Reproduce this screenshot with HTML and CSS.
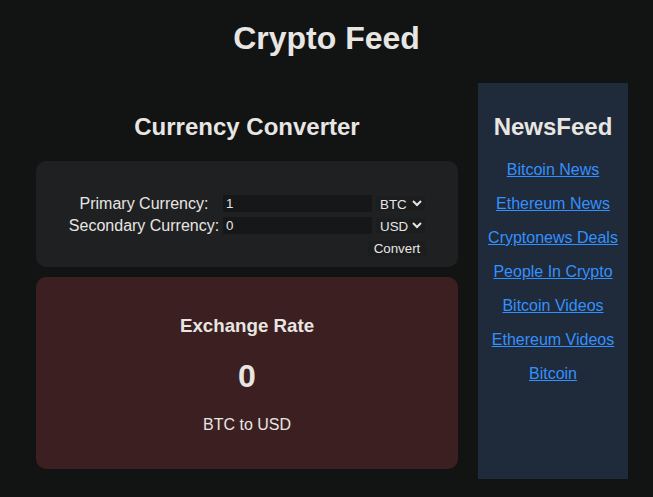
FILE: index.html
```html
<!DOCTYPE html>
<html lang="en">
<head>
<meta charset="utf-8">
<title>Crypto Feed</title>
<link rel="stylesheet" href="styles.css">
</head>
<body>
<h1 class="title">Crypto Feed</h1>
<div class="layout">
  <main class="main">
    <h2 class="section-title">Currency Converter</h2>
    <div class="card converter">
      <div class="form">
        <label class="label" for="primary">Primary Currency:</label>
        <input class="amount" id="primary" type="number" value="1">
        <select class="currency"><option>BTC</option><option>ETH</option></select>
        <label class="label" for="secondary">Secondary Currency:</label>
        <input class="amount" id="secondary" type="number" value="0">
        <select class="currency"><option>USD</option><option>EUR</option></select>
        <button class="convert" type="button">Convert</button>
      </div>
    </div>
    <div class="card rate">
      <h3 class="rate-title">Exchange Rate</h3>
      <div class="rate-value">0</div>
      <p class="rate-pair">BTC to USD</p>
    </div>
  </main>
  <aside class="sidebar">
    <h2 class="section-title">NewsFeed</h2>
    <p class="news-item"><a href="#">Bitcoin News</a></p>
    <p class="news-item"><a href="#">Ethereum News</a></p>
    <p class="news-item"><a href="#">Cryptonews Deals</a></p>
    <p class="news-item"><a href="#">People In Crypto</a></p>
    <p class="news-item"><a href="#">Bitcoin Videos</a></p>
    <p class="news-item"><a href="#">Ethereum Videos</a></p>
    <p class="news-item"><a href="#">Bitcoin</a></p>
  </aside>
</div>
</body>
</html>
```

FILE: styles.css
```css
html, body {
  margin: 0;
  padding: 0;
}
body {
  background: #121313;
  color: #e8e6e3;
  font-family: "Liberation Sans", Arial, sans-serif;
}
.title {
  margin: 20px 0 26px;
  font-size: 32px;
  line-height: 37px;
  font-weight: bold;
  text-align: center;
}
.layout {
  display: flex;
  gap: 20px;
  padding: 0 25px 0 36px;
}
.main {
  flex: 1;
  display: flex;
  flex-direction: column;
  padding-bottom: 10px;
}
.section-title {
  margin: 30px 0 20px;
  font-size: 24px;
  line-height: 28px;
  font-weight: bold;
  text-align: center;
}
.card {
  border-radius: 10px;
}
.converter {
  background: #1f2022;
  padding: 33px 0 11px;
  margin-bottom: 10px;
}
.form {
  display: grid;
  grid-template-columns: 150px 149px 49px;
  column-gap: 4px;
  row-gap: 3px;
  justify-content: center;
  align-items: center;
}
.label {
  justify-self: center;
  font-size: 16px;
  line-height: 19px;
  text-align: center;
  white-space: nowrap;
}
.amount {
  box-sizing: border-box;
  width: 149px;
  height: 17px;
  border: none;
  outline: none;
  padding: 0 3px;
  background: #161718;
  color: #e8e6e3;
  font-family: "Liberation Sans", Arial, sans-serif;
  font-size: 13.33px;
  -moz-appearance: textfield;
}
.amount::-webkit-inner-spin-button,
.amount::-webkit-outer-spin-button {
  -webkit-appearance: none;
  margin: 0;
}
.currency {
  box-sizing: border-box;
  width: 49px;
  height: 15px;
  border: none;
  padding: 0;
  background-color: #1c1d1e;
  color: #e8e6e3;
  color-scheme: dark;
  font-family: "Liberation Sans", Arial, sans-serif;
  font-size: 13.33px;
}
.convert {
  grid-column: 2 / 4;
  justify-self: end;
  box-sizing: border-box;
  width: 58px;
  height: 15px;
  margin: 3px -1px 0 0;
  padding: 0;
  border: none;
  background: #1c1d1e;
  color: #e8e6e3;
  font-family: "Liberation Sans", Arial, sans-serif;
  font-size: 13.33px;
  line-height: 15px;
}
.rate {
  background: #3c1f20;
  padding: 38px 0 35px;
  text-align: center;
}
.rate-title {
  margin: 0 0 21px;
  font-size: 18.72px;
  line-height: 22px;
  font-weight: bold;
}
.rate-value {
  margin: 0 0 21px;
  font-size: 32px;
  line-height: 37px;
  font-weight: bold;
}
.rate-pair {
  margin: 0;
  font-size: 16px;
  line-height: 18px;
}
.sidebar {
  width: 150px;
  flex: none;
  background: #1f2a3b;
  text-align: center;
}
.sidebar .section-title {
  margin-bottom: 20px;
}
.news-item {
  margin: 16px 0;
  font-size: 16px;
  line-height: 18px;
}
.news-item:first-of-type {
  margin-top: 0;
}
.news-item a {
  color: #3391ff;
}
```
